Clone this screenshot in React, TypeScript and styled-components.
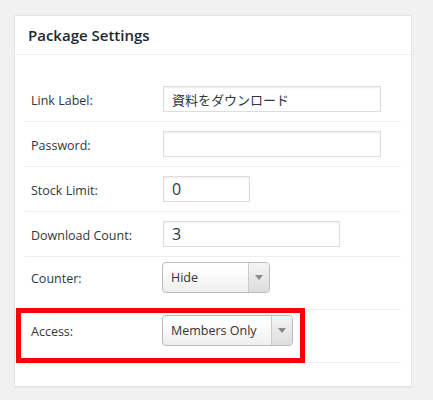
import styled, { createGlobalStyle } from "styled-components";

const GlobalStyle = createGlobalStyle`
  html, body {
    margin: 0;
    padding: 0;
    background: #f1f1f1;
  }
  body {
    font-family: "Open Sans", "Noto Sans CJK JP", sans-serif;
    color: #32373c;
  }
`;

type FieldRow =
  | { label: string; kind: "input"; value: string; width: number; size?: number }
  | { label: string; kind: "select"; value: string; width: number; marked?: boolean };

const rows: FieldRow[] = [
  { label: "Link Label:", kind: "input", value: "資料をダウンロード", width: 218, size: 13 },
  { label: "Password:", kind: "input", value: "", width: 218 },
  { label: "Stock Limit:", kind: "input", value: "0", width: 87 },
  { label: "Download Count:", kind: "input", value: "3", width: 177 },
  { label: "Counter:", kind: "select", value: "Hide", width: 108 },
  { label: "Access:", kind: "select", value: "Members Only", width: 131, marked: true },
];

export default function App() {
  return (
    <>
      <GlobalStyle />
      <Page>
        <Panel>
          <Header>
            <h3>Package Settings</h3>
          </Header>
          <Body>
            {rows.map((r) => (
              <Row key={r.label} $select={r.kind === "select"}>
                <Label>{r.label}</Label>
                <div>
                  {r.kind === "input" ? (
                    <TextInput
                      type="text"
                      defaultValue={r.value}
                      $width={r.width}
                      $size={r.size ?? 16}
                    />
                  ) : (
                    <Select $width={r.width}>
                      <span>{r.value}</span>
                      <Arrow>
                        <svg width="8" height="5" viewBox="0 0 8 5">
                          <path d="M0 0h8L4 5z" fill="#888" />
                        </svg>
                      </Arrow>
                    </Select>
                  )}
                </div>
                {r.kind === "select" && r.marked && <Highlight />}
              </Row>
            ))}
          </Body>
        </Panel>
      </Page>
    </>
  );
}

const Page = styled.div`
  padding: 15px 0 0 14px;
  height: 385px;
`;

const Panel = styled.section`
  width: 396px;
  background: #fff;
  border: 1px solid #e5e5e5;
  box-shadow: 0 1px 1px rgba(0, 0, 0, 0.04);
`;

const Header = styled.div`
  height: 38px;
  display: flex;
  align-items: center;
  padding: 0 13px;
  border-bottom: 1px solid #eeeeee;
  h3 {
    margin: 0;
    font-size: 15px;
    font-weight: 600;
    color: #23282d;
  }
`;

const Body = styled.div`
  padding: 22px 10px 23px;
`;

const Row = styled.div<{ $select?: boolean }>`
  position: relative;
  display: grid;
  grid-template-columns: 138px 1fr;
  align-items: center;
  padding: ${({ $select }) => ($select ? "5px 0 16px" : "9px 0")};
  border-bottom: 1px solid #eeeeee;
  & > div {
    align-self: start;
  }
`;

const Label = styled.label`
  padding: 2px 0 0 6px;
  font-size: 12.5px;
  color: #32373c;
`;

const TextInput = styled.input<{ $width: number; $size: number }>`
  box-sizing: border-box;
  display: block;
  width: ${({ $width }) => $width}px;
  height: 26px;
  padding: 0 8px;
  border: 1px solid #dddddd;
  box-shadow: inset 0 1px 2px rgba(0, 0, 0, 0.07);
  background: #fff;
  font-family: "Open Sans", "Noto Sans CJK JP", sans-serif;
  font-size: ${({ $size }) => $size}px;
  color: #32373c;
  outline: none;
`;

const Select = styled.div<{ $width: number }>`
  box-sizing: border-box;
  display: flex;
  align-items: stretch;
  width: ${({ $width }) => $width}px;
  height: 31px;
  margin-left: -1px;
  border: 1px solid #bbbbbb;
  border-radius: 4px;
  background: linear-gradient(#ffffff 20%, #eeeeee);
  overflow: hidden;
  font-size: 12.5px;
  color: #333;
  span {
    flex: 1;
    display: flex;
    align-items: center;
    padding-left: 8px;
    white-space: nowrap;
  }
`;

const Arrow = styled.div`
  width: 20px;
  display: flex;
  align-items: center;
  justify-content: center;
  border-left: 1px solid #cccccc;
  background: linear-gradient(#f4f4f4, #dddddd);
`;

const Highlight = styled.div`
  position: absolute;
  left: -9px;
  top: -2px;
  width: 289px;
  height: 55px;
  box-sizing: border-box;
  border: 5px solid #ff0000;
  pointer-events: none;
`;
